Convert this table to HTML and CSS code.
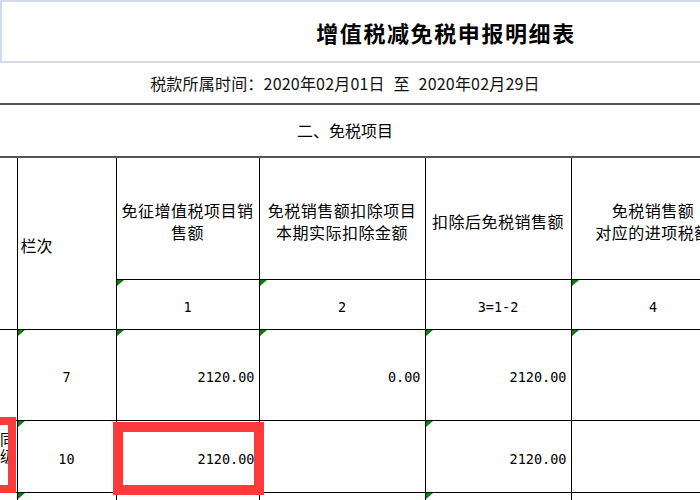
FILE: index.html
```html
<!DOCTYPE html>
<html lang="zh-CN">
<head>
<meta charset="utf-8">
<title>增值税减免税申报明细表</title>
<link rel="stylesheet" href="styles.css">
</head>
<body>
<div class="page">
  <div class="title-box"><h1 class="title">增值税减免税申报明细表</h1></div>
  <div class="period">税款所属时间：2020年02月01日 至 2020年02月29日</div>
  <div class="section"><div class="section-text">二、免税项目</div></div>
  <table class="grid">
    <colgroup>
      <col class="w0"><col class="w1"><col class="w2"><col class="w3"><col class="w4"><col class="w5">
    </colgroup>
    <tr class="r-head">
      <td rowspan="2" class="c0"></td>
      <td rowspan="2" class="lbl">栏次</td>
      <td class="hd">免征增值税项目销<br>售额</td>
      <td class="hd">免税销售额扣除项目<br>本期实际扣除金额</td>
      <td class="hd">扣除后免税销售额</td>
      <td class="hd">免税销售额<br>对应的进项税额</td>
    </tr>
    <tr class="r-idx">
      <td class="num mark">1</td>
      <td class="num mark">2</td>
      <td class="num">3=1-2</td>
      <td class="num mark">4</td>
    </tr>
    <tr class="r-7">
      <td class="c0"></td>
      <td class="num mark">7</td>
      <td class="amt mark">2120.00</td>
      <td class="amt mark">0.00</td>
      <td class="amt mark">2120.00</td>
      <td class="mark"></td>
    </tr>
    <tr class="r-10">
      <td class="c0 flag"><span class="clip">同<br>级</span></td>
      <td class="num mark">10</td>
      <td class="amt hl">2120.00</td>
      <td></td>
      <td class="amt mark">2120.00</td>
      <td></td>
    </tr>
    <tr class="r-next">
      <td class="c0"></td>
      <td class="mark"></td>
      <td></td>
      <td></td>
      <td class="mark"></td>
      <td></td>
    </tr>
  </table>
</div>
</body>
</html>
```

FILE: styles.css
```css
html, body {
  margin: 0;
  padding: 0;
  background: #fff;
  overflow: hidden;
}
body {
  width: 700px;
  height: 500px;
  font-family: "Noto Sans CJK SC", "Noto Sans", sans-serif;
  color: #000;
}
.page {
  width: 900px;
}
.title-box {
  width: 890px;
  height: 63px;
  box-sizing: border-box;
  border: 2px solid #d3dbeb;
  border-right: none;
  display: flex;
  align-items: center;
  justify-content: center;
}
.title {
  margin: 0;
  font-size: 22px;
  font-weight: bold;
  letter-spacing: 1.6px;
  line-height: 1;
}
.period {
  width: 690px;
  height: 40px;
  line-height: 40px;
  text-align: center;
  font-size: 16px;
  letter-spacing: 0.2px;
  word-spacing: 5px;
  color: #111;
}
.section {
  height: 51px;
  border-top: 2px solid #555;
  border-bottom: 2px solid #555;
}
.section-text {
  width: 690px;
  line-height: 51px;
  text-align: center;
  font-size: 16px;
}
.grid {
  border-collapse: collapse;
  table-layout: fixed;
  width: 735px;
}
.w0 { width: 17px; }
.w1 { width: 99px; }
.w2 { width: 143px; }
.w3 { width: 166px; }
.w4 { width: 146px; }
.w5 { width: 164px; }
.grid td {
  border: 1px solid #000;
  padding: 0;
  position: relative;
  font-size: 16px;
  vertical-align: middle;
}
.grid .r-head td {
  border-top: none;
}
.grid td.c0 {
  border-left: none;
}
.r-head { height: 121px; }
.r-idx { height: 50px; }
.r-7 { height: 91px; }
.r-10 { height: 72px; }
.r-next { height: 40px; }
.r-idx td {
  border-top-color: #555;
}
.hd {
  text-align: center;
  line-height: 22px;
  letter-spacing: 0.5px;
  padding-top: 6px !important;
}
.lbl {
  text-align: left;
  padding-left: 3px !important;
  padding-top: 4px !important;
}
.num {
  text-align: center;
  font-family: "DejaVu Sans Mono", "Liberation Mono", monospace;
  font-size: 13.5px !important;
  padding-top: 5px !important;
}
.amt {
  text-align: right;
  padding-right: 4px !important;
  padding-top: 5px !important;
  font-family: "DejaVu Sans Mono", "Liberation Mono", monospace;
  font-size: 13.5px !important;
}
.mark::before {
  content: "";
  position: absolute;
  top: 0;
  left: 0;
  border-top: 6px solid #0b7d0b;
  border-right: 7px solid transparent;
}
.flag .clip {
  display: block;
  text-align: right;
  padding-right: 9px;
  line-height: 17px;
  font-size: 15px;
  margin-top: -18px;
}
.flag::after {
  content: "";
  position: absolute;
  top: -4px;
  right: 1px;
  width: 40px;
  height: 76px;
  box-sizing: border-box;
  border: 8px solid #fb3b3b;
}
.hl::after {
  content: "";
  position: absolute;
  left: -4px;
  top: 1px;
  width: 151px;
  height: 73px;
  box-sizing: border-box;
  border: 10px solid #fb3b3b;
}
```
